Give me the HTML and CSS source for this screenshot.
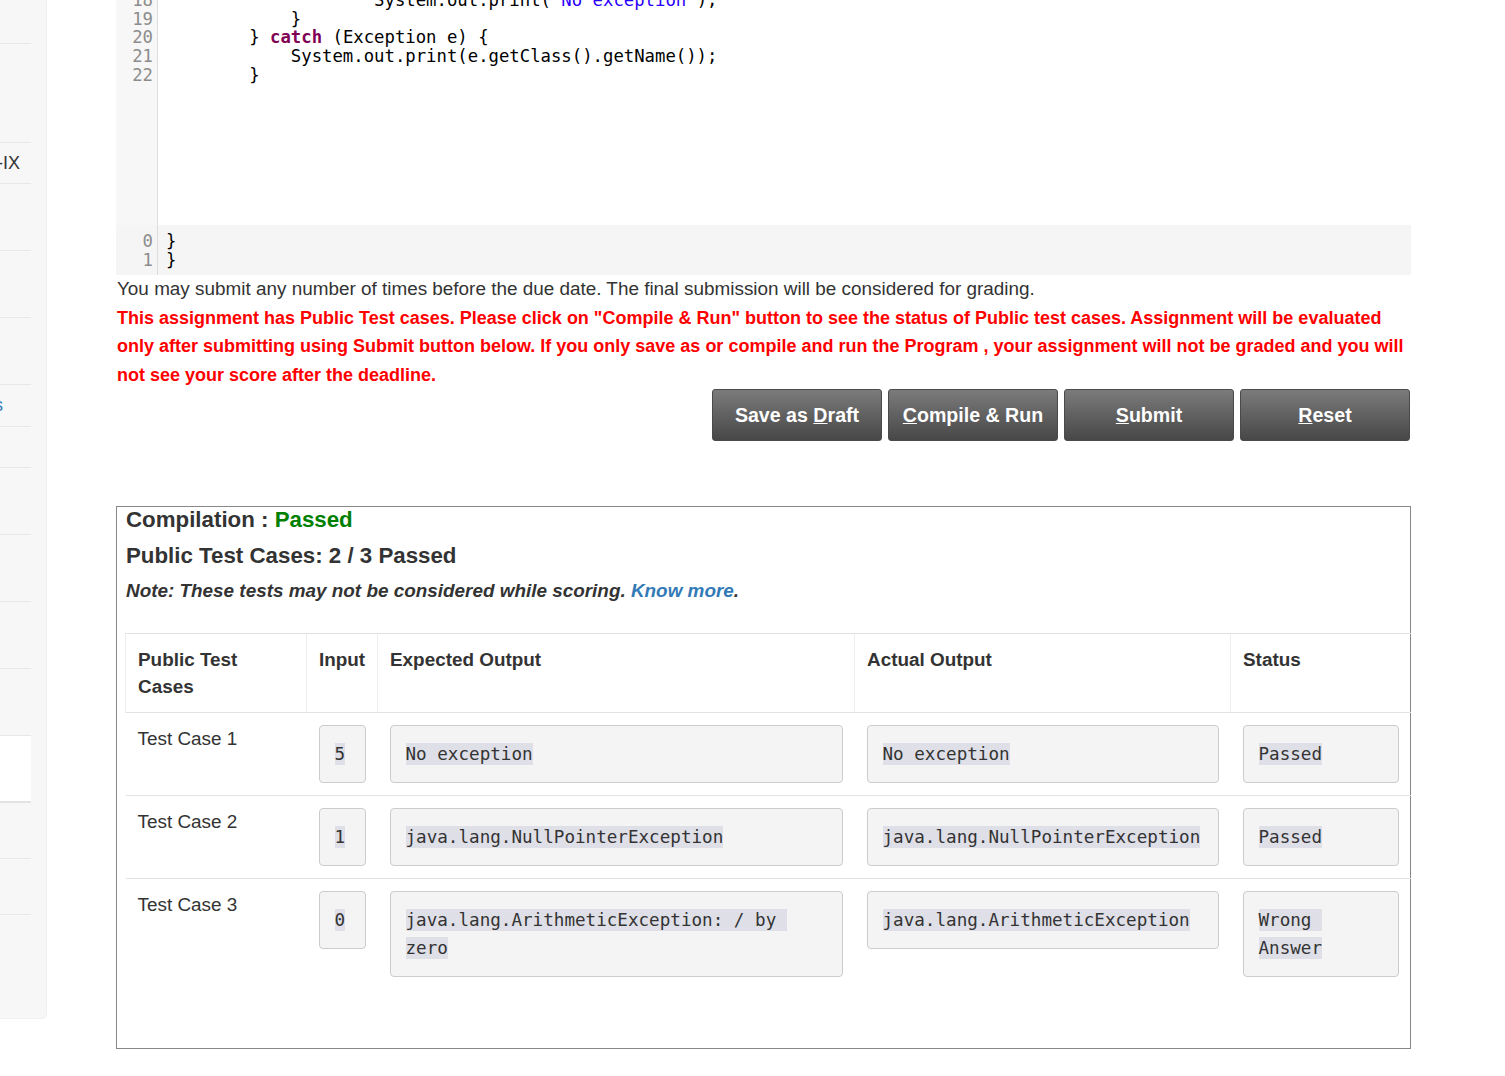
FILE: index.html
```html
<!DOCTYPE html>
<html lang="en">
<head>
<meta charset="utf-8">
<title>Assignment</title>
<link rel="stylesheet" href="styles.css">
</head>
<body>
<div class="page">
  <aside class="sidebar">
    <div class="nav-item h44"></div>
    <div class="nav-item h99"></div>
    <div class="nav-item h41"><span>Week-IX</span></div>
    <div class="nav-item h67"></div>
    <div class="nav-item h67"></div>
    <div class="nav-item h67"></div>
    <div class="nav-item h42 link"><span>Tests</span></div>
    <div class="nav-item h41"></div>
    <div class="nav-item h67"></div>
    <div class="nav-item h67"></div>
    <div class="nav-item h67"></div>
    <div class="nav-item h67"></div>
    <div class="nav-item h67 active"></div>
    <div class="nav-item h56"></div>
    <div class="nav-item h56"></div>
    <div class="nav-item last"></div>
  </aside>

  <main class="main">
    <div class="editor">
      <div class="cm-main">
        <div class="cm-gutter">18<br>19<br>20<br>21<br>22</div>
<div class="cm-code">                    System.out.print(<span class="str">"No exception"</span>);
            }
        } <span class="kw">catch</span> (Exception e) {
            System.out.print(e.getClass().getName());
        }</div>
      </div>
      <div class="cm-suffix">
        <div class="cm-gutter plain">0<br>1</div>
<div class="cm-code">}
}</div>
      </div>
    </div>

    <p class="info">You may submit any number of times before the due date. The final submission will be considered for grading.</p>
    <p class="info warn">This assignment has Public Test cases. Please click on "Compile &amp; Run" button to see the status of Public test cases. Assignment will be evaluated only after submitting using Submit button below. If you only save as or compile and run the Program , your assignment will not be graded and you will not see your score after the deadline.</p>

    <div class="actions">
      <button class="btn">Save as <u>D</u>raft</button>
      <button class="btn"><u>C</u>ompile &amp; Run</button>
      <button class="btn"><u>S</u>ubmit</button>
      <button class="btn"><u>R</u>eset</button>
    </div>

    <section class="result">
      <div class="res-title">Compilation : <span class="ok">Passed</span></div>
      <div class="res-title second">Public Test Cases: 2 / 3 Passed</div>
      <div class="res-note">Note: These tests may not be considered while scoring. <a class="more" href="#">Know more</a>.</div>

      <table class="cases">
        <colgroup>
          <col class="c-name">
          <col class="c-input">
          <col class="c-exp">
          <col class="c-act">
          <col class="c-status">
        </colgroup>
        <thead>
          <tr>
            <th>Public Test Cases</th>
            <th>Input</th>
            <th>Expected Output</th>
            <th>Actual Output</th>
            <th>Status</th>
          </tr>
        </thead>
        <tbody>
          <tr>
            <td>Test Case 1</td>
            <td><pre class="out"><span class="hl">5</span></pre></td>
            <td><pre class="out"><span class="hl">No exception</span></pre></td>
            <td><pre class="out"><span class="hl">No exception</span></pre></td>
            <td><pre class="out"><span class="hl">Passed</span></pre></td>
          </tr>
          <tr>
            <td>Test Case 2</td>
            <td><pre class="out"><span class="hl">1</span></pre></td>
            <td><pre class="out"><span class="hl">java.lang.NullPointerException</span></pre></td>
            <td><pre class="out"><span class="hl">java.lang.NullPointerException</span></pre></td>
            <td><pre class="out"><span class="hl">Passed</span></pre></td>
          </tr>
          <tr>
            <td>Test Case 3</td>
            <td><pre class="out"><span class="hl">0</span></pre></td>
            <td><pre class="out"><span class="hl">java.lang.ArithmeticException: / by zero</span></pre></td>
            <td><pre class="out"><span class="hl">java.lang.ArithmeticException</span></pre></td>
            <td><pre class="out"><span class="hl">Wrong Answer</span></pre></td>
          </tr>
        </tbody>
      </table>
    </section>
  </main>
</div>
</body>
</html>
```

FILE: styles.css
```css
* { box-sizing: border-box; }

body {
  margin: 0;
  font-family: "Liberation Sans", Arial, sans-serif;
  color: #333;
  background: #fff;
  overflow: hidden;
}

.page {
  display: flex;
  align-items: flex-start;
}

/* ---------- sidebar ---------- */
.sidebar {
  flex: none;
  width: 47px;
  background: #f7f7f7;
  border-right: 1px solid #f0f0f0;
  border-bottom: 1px solid #f0f0f0;
  border-radius: 0 0 5px 0;
  padding-right: 15px;
}

.nav-item {
  width: 31px;
  border-bottom: 1px solid #e8e8e8;
  display: flex;
  align-items: center;
  justify-content: flex-end;
  overflow: hidden;
  white-space: nowrap;
  font-size: 18px;
  color: #333;
  padding-right: 11px;
}
.nav-item.link { color: #337ab7; padding-right: 28px; }
.nav-item.active { background: #fff; border-bottom: 2px solid #e2e2e2; }
.nav-item.last { border-bottom: none; height: 103px; }

.h41 { height: 41px; }
.h42 { height: 42px; }
.h44 { height: 44px; }
.h56 { height: 56px; }
.h67 { height: 67px; }
.h99 { height: 99px; }

/* ---------- main ---------- */
.main {
  flex: none;
  width: 1295px;
  margin-left: 69px;
}

.editor {
  margin-top: -9px;
  font-family: "DejaVu Sans Mono", "Liberation Mono", monospace;
  font-size: 17.3px;
  line-height: 18.7px;
}

.cm-main {
  display: flex;
  height: 234px;
  background: #fff;
}

.cm-suffix {
  display: flex;
  height: 50px;
  background: #f5f5f5;
}

.cm-gutter {
  flex: none;
  width: 42px;
  background: #f7f7f7;
  border-right: 1px solid #dddddd;
  text-align: right;
  padding-right: 4px;
  color: #8c8c8c;
}
.cm-gutter.plain { background: transparent; padding-top: 7px; }

.cm-code {
  padding-left: 8px;
  white-space: pre;
  color: #000;
}
.cm-suffix .cm-code { padding-top: 7px; }

.kw { color: #7f0055; font-weight: bold; }
.str { color: #2a00ff; }

.info {
  margin: 0;
  font-size: 18.9px;
  line-height: 28.5px;
  padding-left: 1px;
}
.warn {
  color: #ff0000;
  font-weight: bold;
  font-size: 18px;
}

/* ---------- buttons ---------- */
.actions {
  display: flex;
  justify-content: flex-end;
  gap: 6px;
  padding-right: 1px;
}

.btn {
  width: 170px;
  height: 52px;
  border: 1px solid #4a4a4a;
  border-radius: 3px;
  background: linear-gradient(#7b7b7b, #474747);
  color: #fff;
  font-family: "Liberation Sans", Arial, sans-serif;
  font-weight: bold;
  font-size: 19.6px;
  padding: 0;
  cursor: pointer;
}

/* ---------- result ---------- */
.result {
  margin-top: 65px;
  border: 1px solid #888;
  padding: 0 0 59px 8px;
}

.res-title {
  font-size: 22.3px;
  font-weight: bold;
  line-height: 26px;
  padding-left: 1px;
}
.res-title.second { margin-top: 10px; }
.ok { color: #008000; }

.res-note {
  margin-top: 9px;
  font-size: 18.9px;
  line-height: 26px;
  font-weight: bold;
  font-style: italic;
  padding-left: 1px;
}
.more { color: #337ab7; text-decoration: none; }

.cases {
  margin-top: 29px;
  width: 1285px;
  table-layout: fixed;
  border-collapse: collapse;
  font-size: 18.9px;
  line-height: 27px;
}
.c-name { width: 181px; }
.c-input { width: 71px; }
.c-exp { width: 477px; }
.c-act { width: 376px; }
.c-status { width: 180px; }

.cases th {
  text-align: left;
  vertical-align: top;
  padding: 12px;
  font-weight: bold;
  border-top: 1px solid #e2e2e2;
  border-bottom: 1px solid #e2e2e2;
  border-left: 1px solid #eeeeee;
}
.cases td {
  vertical-align: top;
  padding: 12px;
  border-top: 1px solid #e2e2e2;
}

.out {
  margin: 0;
  padding: 14px 13px 14px 15px;
  background: #f4f4f4;
  border: 1px solid #cccccc;
  border-radius: 4px;
  font-family: "DejaVu Sans Mono", "Liberation Mono", monospace;
  font-size: 17.6px;
  line-height: 28px;
  color: #333;
  white-space: pre-wrap;
  word-break: normal;
}
.hl { background: #dfdfe7; padding: 1px 0; }
```
